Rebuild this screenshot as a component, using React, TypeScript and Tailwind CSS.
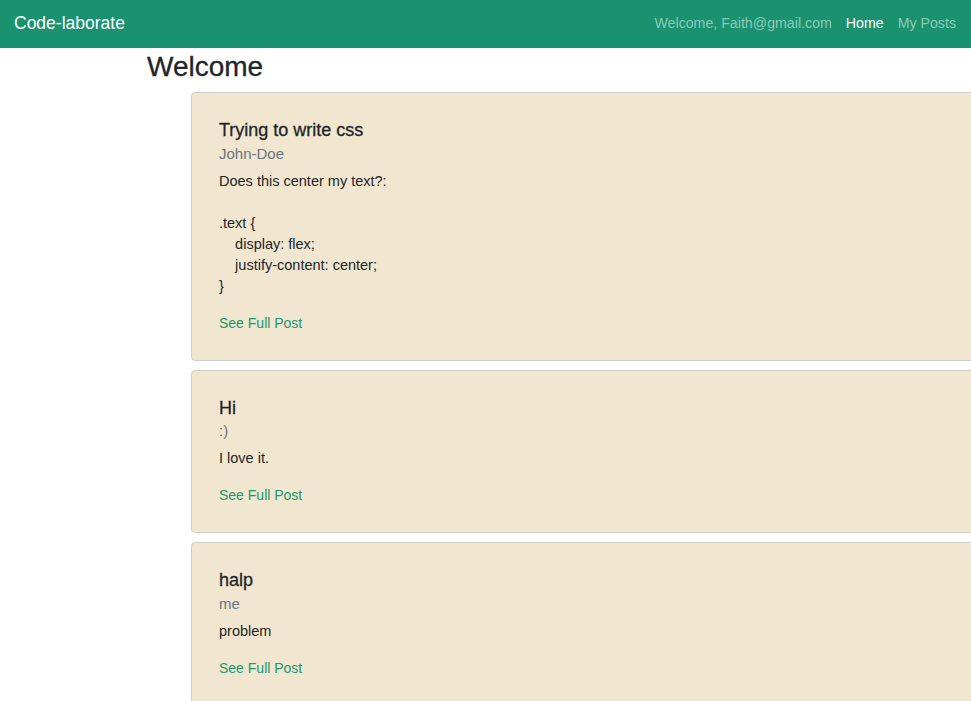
import React from "react";

const posts = [
  {
    title: "Trying to write css",
    author: "John-Doe",
    body: ["Does this center my text?:", "\u00a0", ".text {", "\u00a0\u00a0\u00a0\u00a0display: flex;", "\u00a0\u00a0\u00a0\u00a0justify-content: center;", "}"],
  },
  { title: "Hi", author: ":)", body: ["I love it."] },
  { title: "halp", author: "me", body: ["problem"] },
];

export default function App() {
  return (
    <div
      className="w-full min-h-[701px] overflow-hidden bg-white text-[#212529]"
      style={{ fontFamily: '"Liberation Sans", Arial, sans-serif' }}
    >
      <nav className="h-12 bg-[#1a9270] flex items-center justify-between pl-[14px] pr-2">
        <span className="text-white text-[17.5px] leading-none">Code-laborate</span>
        <div className="flex items-center text-[14.2px]">
          <span className="px-[7px] text-[#8dc9b7]">Welcome, Faith@gmail.com</span>
          <span className="px-[7px] text-white">Home</span>
          <span className="px-[7px] text-[#8dc9b7]">My Posts</span>
        </div>
      </nav>
      <main className="pl-[147px]">
        <h3 className="pt-[2px] text-[28px] leading-[34px] font-medium [-webkit-text-stroke:0.3px]">Welcome</h3>
        <div className="ml-[44px] mt-[8px] w-[900px] flex flex-col gap-[9px]">
          {posts.map((p, i) => (
            <div
              key={i}
              className="bg-[#f1e6cf] border border-[#cfcdc8] rounded-[4px] px-[27px] pt-[27px] pb-[26px]"
            >
              <h5 className="text-[18px] leading-[21.6px] font-medium [-webkit-text-stroke:0.3px]">{p.title}</h5>
              <h6 className="mt-[3px] text-[15px] leading-[18px] text-[#6c757d]">{p.author}</h6>
              <div className="mt-[8px] text-[14.5px] leading-[21px]">
                {p.body.map((l, j) => (
                  <div key={j} className="whitespace-pre">{l}</div>
                ))}
              </div>
              <a className="block mt-[16px] text-[14px] leading-[21px] text-[#1a9770]">See Full Post</a>
            </div>
          ))}
        </div>
      </main>
    </div>
  );
}
